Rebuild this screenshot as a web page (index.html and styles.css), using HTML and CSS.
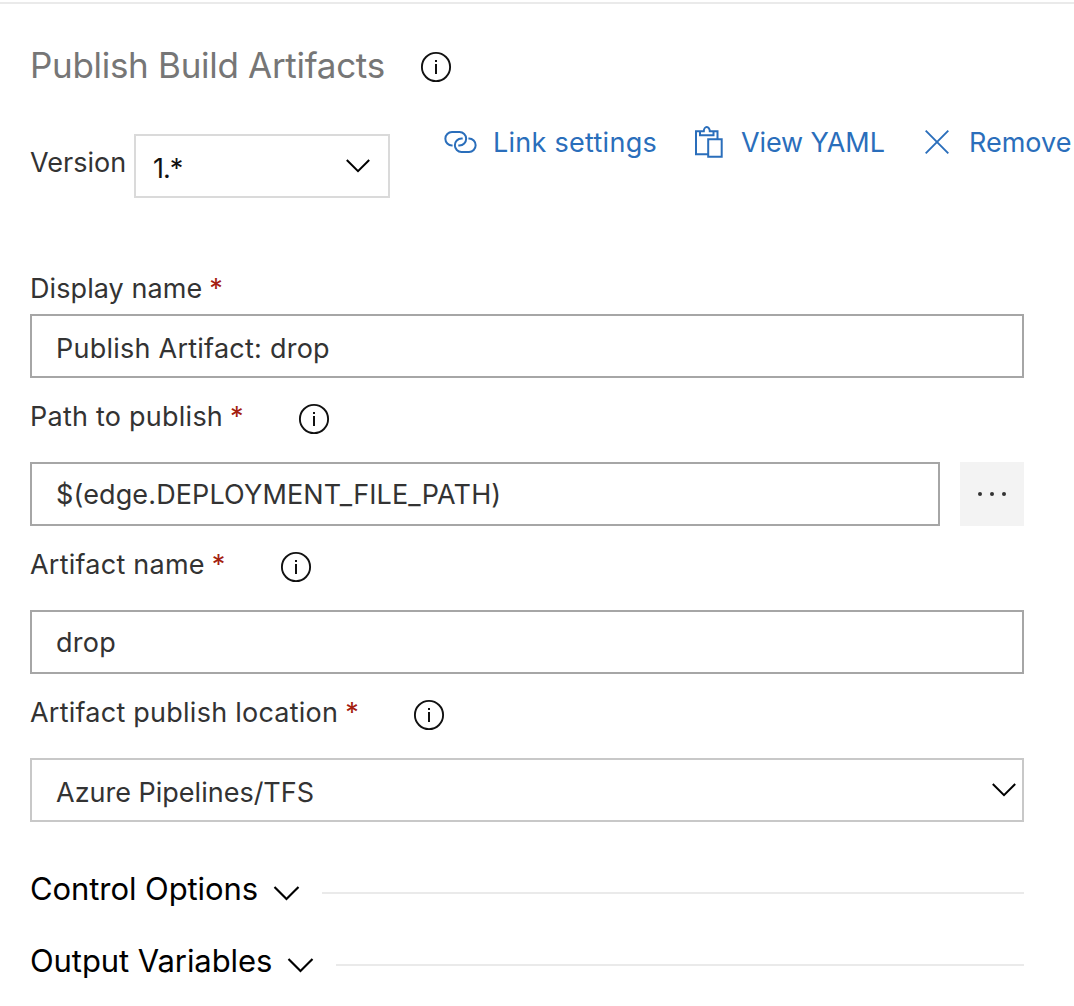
FILE: index.html
```html
<!DOCTYPE html>
<html lang="en">
<head>
<meta charset="utf-8">
<title>Publish Build Artifacts</title>
<link rel="stylesheet" href="styles.css">
</head>
<body>
<svg class="defs" aria-hidden="true">
  <symbol id="info" viewBox="0 0 32 32">
    <circle cx="16" cy="16" r="14.1" fill="none" stroke="#111" stroke-width="1.9"/>
    <path d="M15 9h2v2h-2zM15 13h2v10h-2z" fill="#111"/>
  </symbol>
  <symbol id="chevron" viewBox="0 0 24 14">
    <path d="M.8 1 12 12.2 23.2 1" fill="none" stroke="#000" stroke-width="2"/>
  </symbol>
</svg>
<main class="panel">
  <header class="title-row">
    <h1 class="title">Publish Build Artifacts</h1>
    <svg class="info"><use href="#info"/></svg>
  </header>

  <div class="toolbar">
    <span class="version-label">Version</span>
    <div class="version-select"><span class="version-value">1.*</span><svg class="chevron"><use href="#chevron"/></svg></div>
    <a class="command link"><svg class="link-icon" viewBox="0 0 33 22"><path d="M8.6 14.4H8A6.6 6.6 0 0 1 8 1.1h7.500a6.100 6.100 0 0 1 0 13.300h-1.200M24.400 7.600h.6a6.600 6.600 0 0 1 0 13.300h-7.500a6.100 6.100 0 0 1 0-13.300h1.200" fill="none" stroke="#2a6ebb" stroke-width="2"/></svg><span class="t-link">Link settings</span></a>
    <a class="command yaml"><svg class="clip-icon" viewBox="0 0 30 32"><path d="M6 5.300H2v23h12M19.500 5.300h4v8M6 5.300v4h13.500v-4h-3.700a3 4.200 0 0 0-6 0ZM14.200 13.300h13.500v17.500H14.200Z" fill="none" stroke="#2a6ebb" stroke-width="2"/></svg><span class="t-yaml">View YAML</span></a>
    <a class="command remove"><svg class="x-icon" viewBox="0 0 24 24"><path d="M.7.7 23.300 23.300M23.300.7.7 23.300" stroke="#2a6ebb" stroke-width="1.900"/></svg><span class="t-remove">Remove</span></a>
  </div>

  <section class="field first">
    <div class="label-row"><span class="label l-display">Display name</span><span class="star">*</span></div>
    <div class="input"><span class="v-display">Publish Artifact: drop</span></div>
  </section>
  <section class="field">
    <div class="label-row"><span class="label">Path to publish</span><span class="star">*</span><svg class="info"><use href="#info"/></svg></div>
    <div class="input-row"><div class="input"><span class="v-path">$(edge.DEPLOYMENT_FILE_PATH)</span></div><div class="more"><i class="dot"></i><i class="dot"></i><i class="dot"></i></div></div>
  </section>
  <section class="field">
    <div class="label-row"><span class="label">Artifact name</span><span class="star">*</span><svg class="info"><use href="#info"/></svg></div>
    <div class="input"><span class="v-display">drop</span></div>
  </section>
  <section class="field">
    <div class="label-row"><span class="label">Artifact publish location</span><span class="star">*</span><svg class="info"><use href="#info"/></svg></div>
    <div class="input select"><span class="v-location">Azure Pipelines/TFS</span><svg class="chevron"><use href="#chevron"/></svg></div>
  </section>

  <div class="group first-group"><h2 class="group-title">Control Options</h2><svg class="group-chevron"><use href="#chevron"/></svg><div class="rule"></div></div>
  <div class="group"><h2 class="group-title">Output Variables</h2><svg class="group-chevron"><use href="#chevron"/></svg><div class="rule"></div></div>
</main>
</body>
</html>
```
FILE: styles.css
```css
* { box-sizing: border-box; }
body {
  margin: 0;
  background: #fff;
  color: #333;
  font: 27px/34px Inter, "Liberation Sans", sans-serif;
  overflow: hidden;
}
.defs { display: none; }
span, h1, h2 { white-space: nowrap; flex: none; }
svg { display: block; flex: none; }
.panel {
  height: 1004px;
  margin-top: 2px;
  border-top: 2px solid #eaeaea;
  padding: 40px 0 0 30px;
}
.info { width: 32px; height: 32px; }
.title-row { display: flex; height: 44px; align-items: center; }
.title-row .info { margin: 2px 0 0 35px; }
.title { margin: 0; padding-bottom: 2px; font-size: 35px; font-weight: 400; line-height: 42px; letter-spacing: -0.3px; color: #767676; }
.toolbar { display: flex; height: 64px; margin-top: 46px; }
.version-label { width: 104px; padding-top: 12px; }
.version-value { letter-spacing: -1px; }
.version-select {
  display: flex;
  justify-content: space-between;
  width: 256px;
  height: 64px;
  flex: none;
  border: 2px solid #dadada;
  padding: 16px 18px 0 17px;
  color: #111;
}
.chevron { width: 24px; height: 14px; }
.version-select .chevron { margin-top: 7px; }
.command { display: flex; height: 34px; flex: none; margin-top: -8px; color: #2a6ebb; }
.link { margin-left: 54px; width: 250px; }
.yaml { width: 229px; }
.link-icon { width: 33px; height: 22px; margin: 5px 16px 0 0; }
.clip-icon { width: 30px; height: 32px; margin: 0 17px 0 0; }
.x-icon { width: 24px; height: 24px; margin: 4px 20px 0 2px; }
.t-link { letter-spacing: 0.27px; }
.t-yaml { letter-spacing: -0.1px; }
.field { height: 148px; }
.field.first { height: 128px; margin-top: 74px; }
.label { letter-spacing: 0.24px; }
.l-display { letter-spacing: 0.08px; }
.label-row { display: flex; height: 62px; }
.first .label-row { height: 42px; }
.star { width: 12px; margin-left: 7px; color: #a4200f; }
.label-row .info { margin: 3px 0 0 56px; }
.input {
  display: flex;
  justify-content: space-between;
  width: 994px;
  height: 64px;
  border: 2px solid #a6a6a6;
  padding: 14px 6px 0 24px;
}
.v-display { letter-spacing: 0.24px; }
.v-path { letter-spacing: 0.13px; }
.first .input, .select { padding-top: 16px; }
.select { border-color: #c8c8c8; }
.select .chevron { margin-top: 7px; }
.input-row { display: flex; gap: 20px; }
.input-row .input { width: 910px; }
.more { display: flex; width: 64px; height: 64px; align-items: center; justify-content: center; gap: 8px; background: #f3f3f3; }
.dot { width: 4px; height: 4px; border-radius: 2px; background: #333; }
.group { display: flex; height: 72px; width: 994px; }
.first-group { margin-top: 26px; }
.group-title { margin: 0; font-size: 31px; font-weight: 400; line-height: 38px; letter-spacing: -0.08px; color: #000; }
.group-chevron { width: 27px; height: 15px; margin: 16px 22px 0 15px; }
.rule { flex: 1; height: 2px; margin-top: 22px; background: #eaeaea; }
```
